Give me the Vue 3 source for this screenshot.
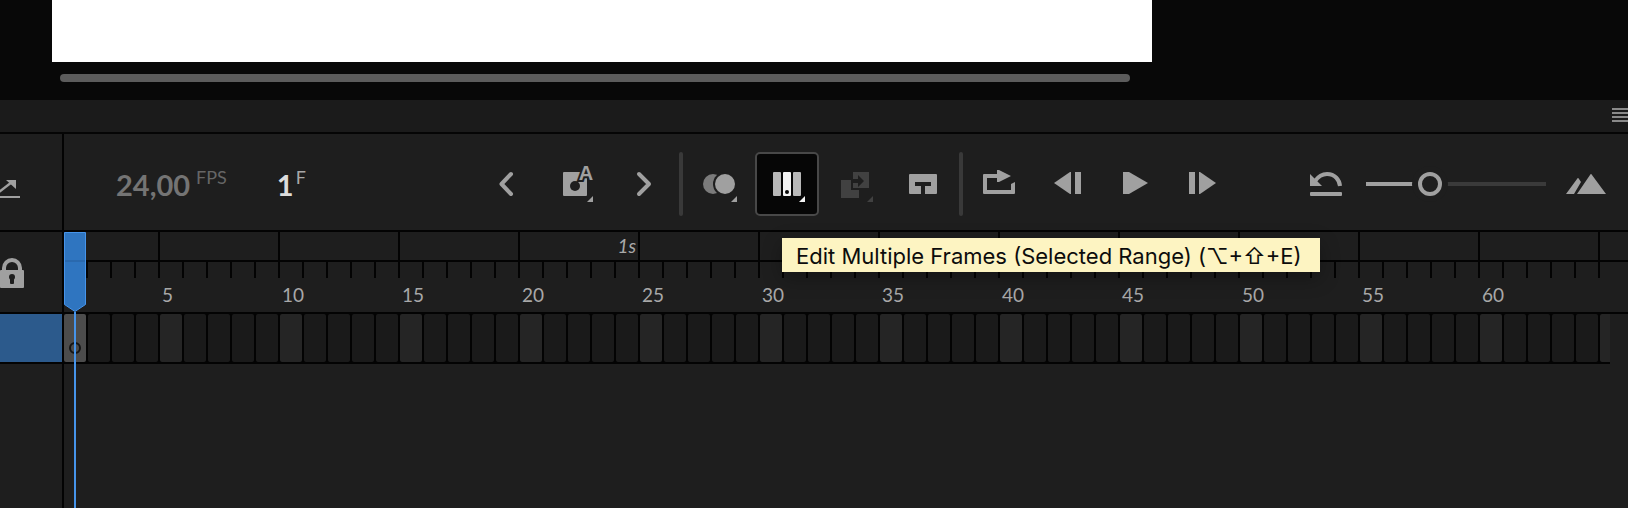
<script setup>
import { ref, computed } from 'vue'

const zoom = ref(100)
const zoomStyle = computed(() => ({ '--fill': `${12 + (156 * zoom.value) / 300}px` }))

const frames = Array.from({ length: 65 }, (_, i) => i + 1)
const spans = Array.from({ length: 14 }, (_, i) => ({
  id: i,
  first: i === 0,
  label: i === 4 ? '1s' : ''
}))
</script>

<template>
  <div class="app">
    <section class="stage" aria-label="Stage">
      <div class="canvas"></div>
      <div class="scroll-track"><div class="scroll-thumb"></div></div>
    </section>

    <header class="panel-head">
      <button class="menu" aria-label="Panel menu"><i></i><i></i><i></i><i></i></button>
    </header>

    <div class="toolbar">
      <div class="side side-tools">
        <button class="bare" aria-label="Layer parenting">
          <svg width="20" height="24" viewBox="0 0 20 24">
            <path d="M0 21H20" stroke="#a0a0a0" stroke-width="2" />
            <path d="M-1 16L12 6" stroke="#a0a0a0" stroke-width="2.4" />
            <path d="M6 4H16V13Z" fill="#a0a0a0" />
          </svg>
        </button>
      </div>

      <div class="readouts">
        <div class="readout fps"><b>24,00</b><sup>FPS</sup></div>
        <div class="readout frame"><b>1</b><sup>F</sup></div>
      </div>

      <div class="tools">
        <button class="tool" aria-label="Previous keyframe">
          <svg viewBox="0 0 64 64"><path class="chev" d="M36 22L26.500 32L36 42" /></svg>
        </button>
        <button class="tool" aria-label="Auto keyframe">
          <svg viewBox="0 0 64 64">
            <rect x="20" y="20" width="24" height="24" rx="1" />
            <circle cx="32" cy="34" r="5" class="bg" />
            <text x="43" y="28" text-anchor="middle" class="glyph">A</text>
            <path d="M50 44V50H44Z" />
          </svg>
        </button>
        <button class="tool" aria-label="Next keyframe">
          <svg viewBox="0 0 64 64"><path class="chev" d="M28 22L38 32L28 42" /></svg>
        </button>
        <span class="sep"></span>
        <button class="tool" aria-label="Onion skin">
          <svg viewBox="0 0 64 64">
            <circle cx="26" cy="32" r="10" fill="#7b7b7b" />
            <circle cx="38" cy="32" r="12" class="bg" />
            <circle cx="38" cy="32" r="10" />
            <path d="M50 44V50H44Z" />
          </svg>
        </button>
        <button class="tool active" aria-label="Edit Multiple Frames" aria-describedby="tip">
          <svg viewBox="0 0 64 64">
            <rect x="18" y="20" width="8" height="24" rx="1" fill="#b8b8b8" />
            <rect x="28" y="20" width="8" height="24" rx="1" fill="#f4f4f4" />
            <rect x="38" y="20" width="8" height="24" rx="1" fill="#b8b8b8" />
            <circle cx="32" cy="40" r="2" fill="#070707" />
            <path d="M50 44V50H44Z" fill="#f4f4f4" />
          </svg>
        </button>
        <button class="tool dim" disabled aria-label="Create tween">
          <svg viewBox="0 0 64 64">
            <path d="M18 28H28V38H36V46H18Z" />
            <path d="M30 20H46V36H30V31H28V27H30Z" />
            <path class="bg" d="M28 27H35V23L41 29L35 35V31H28Z" />
            <path d="M50 44V50H44Z" />
          </svg>
        </button>
        <button class="tool" aria-label="Insert frame">
          <svg viewBox="0 0 64 64">
            <rect x="18" y="22" width="28" height="20" rx="1" />
            <path class="bg" d="M24 30H40V34H34V42H30V34H24Z" />
          </svg>
        </button>
        <span class="sep"></span>
        <button class="tool" aria-label="Loop">
          <svg viewBox="0 0 64 64">
            <path d="M30 18H32L44 24L32 30H30V26H20V38H44V32L48 30V41Q48 42 47 42H17Q16 42 16 41V23Q16 22 17 22H30Z" />
          </svg>
        </button>
        <button class="tool" aria-label="Step back one frame">
          <svg viewBox="0 0 64 64">
            <path d="M36 20V42H35L19 31L35 20Z" /><rect x="40" y="20" width="6" height="22" />
          </svg>
        </button>
        <button class="tool" aria-label="Play">
          <svg viewBox="0 0 64 64"><path d="M20 20H26L45 31L26 42H20Z" /></svg>
        </button>
        <button class="tool" aria-label="Step forward one frame">
          <svg viewBox="0 0 64 64">
            <rect x="18" y="20" width="6" height="22" /><path d="M28 20H29L45 31L29 42H28Z" />
          </svg>
        </button>
      </div>

      <div class="zoom">
        <button class="bare" aria-label="Reset timeline zoom">
          <svg width="32" height="64" viewBox="0 0 32 64">
            <rect y="40" width="32" height="4" rx="1" />
            <path d="M0 22L12 34H0Z" />
            <path d="M5 29Q10 22 17 22C25 22 29.500 28 30 34" fill="none" stroke="#a0a0a0" stroke-width="4" />
          </svg>
        </button>
        <input v-model.number="zoom" class="slider" type="range" min="0" max="300" aria-label="Timeline zoom" :style="zoomStyle" />
        <button class="bare" aria-label="Fit in view">
          <svg width="40" height="64" viewBox="0 0 40 64">
            <path d="M0 42L11 27Q12 25 13 27L15 30L8 42Z" />
            <path d="M11 42L24 23Q25 21 26 23L40 42Z" />
          </svg>
        </button>
      </div>
    </div>

    <div class="ruler-row">
      <div class="side side-lock">
        <button class="bare" aria-label="Lock all layers">
          <svg width="24" height="32" viewBox="0 0 24 32">
            <path d="M4 14V10A8 8 0 0 1 20 10V14" fill="none" stroke="#a0a0a0" stroke-width="4" />
            <rect y="12" width="24" height="18" rx="1" />
            <circle cx="12" cy="19" r="3" class="bg" />
            <rect x="10" y="19" width="4" height="7" rx="1" class="bg" />
          </svg>
        </button>
      </div>
      <div class="ruler">
        <div class="spans">
          <div v-for="s in spans" :key="s.id" class="span" :class="{ first: s.first }">{{ s.label }}</div>
        </div>
        <div class="ticks">
          <div v-for="f in frames" :key="f" class="tick">
            <i></i>
            <span v-if="f % 5 === 0 && f < 65">{{ f }}</span>
          </div>
        </div>
        <div id="tip" class="tooltip" role="tooltip">Edit Multiple Frames (Selected Range) (⌥+⇧+E)</div>
      </div>
    </div>

    <div class="frame-row">
      <div class="side layer"></div>
      <div class="frames">
        <div v-for="f in frames" :key="f" class="cell" :class="{ fifth: f % 5 === 0, current: f === 1 }">
          <i v-if="f === 1" class="blank-key"></i>
        </div>
      </div>
    </div>

    <div class="rest">
      <div class="side"></div>
    </div>

    <div class="playhead">
      <svg width="22" height="80" viewBox="0 0 22 80">
        <path d="M.5 .5H21.500V72.500L11 79.500L.5 72.500Z" fill="#2f75c0" stroke="#4694ea" />
        <path d="M1 29H21" stroke="#2a69ae" stroke-width="2" />
      </svg>
      <div class="needle"></div>
    </div>
  </div>
</template>

<style>
body {
  margin: 0;
  background: #1e1e1e;
}
</style>

<style scoped>
* {
  box-sizing: border-box;
}
.app {
  position: relative;
  display: flex;
  flex-direction: column;
  min-height: 100vh;
  overflow: hidden;
  background: #1e1e1e;
  color: #a8a8a8;
  font-family: Lato, "Open Sans", sans-serif;
}
button {
  padding: 0;
  border: 0;
  background: none;
  color: inherit;
}
svg {
  display: block;
  fill: #a0a0a0;
}
.bg {
  fill: #1e1e1e;
}
.stage {
  height: 100px;
  padding: 0 476px 0 52px;
  background: #080808;
}
.canvas {
  height: 62px;
  background: #fff;
}
.scroll-track {
  padding: 12px 22px 0 8px;
}
.scroll-thumb {
  height: 8px;
  border-radius: 4px;
  background: #5c5c5c;
}
.panel-head {
  display: flex;
  justify-content: flex-end;
  height: 34px;
  padding-top: 8px;
  border-bottom: 2px solid #050505;
  background: #1b1b1b;
}
.menu {
  display: flex;
  flex-direction: column;
  gap: 2px;
  width: 16px;
}
.menu i {
  width: 100%;
  height: 2px;
  background: #8a8a8a;
}
.side {
  flex: none;
  width: 64px;
  border-right: 2px solid #030303;
}
.toolbar {
  display: flex;
  align-items: center;
  height: 98px;
  border-bottom: 2px solid #030303;
}
.side-tools {
  display: flex;
  align-items: center;
  height: 100%;
  padding-top: 12px;
}
.readouts {
  display: flex;
  gap: 50px;
  width: 411px;
  padding: 6px 0 0 52px;
}
.readout {
  display: flex;
  align-items: flex-start;
  gap: 6px;
}
.readout b {
  font-size: 29px;
  line-height: 36px;
}
.readout sup {
  font-size: 18px;
  line-height: 20px;
}
.fps b {
  color: #747474;
}
.fps sup {
  color: #666;
}
.frame {
  gap: 2px;
}
.frame b {
  color: #dcdcdc;
}
.tools {
  display: flex;
  gap: 4px;
  padding-top: 4px;
}
.tool {
  width: 64px;
  height: 64px;
  border-radius: 5px;
}
.tool svg {
  width: 64px;
  height: 64px;
}
.active {
  border: 2px solid #484848;
  background: #060606;
}
.active svg {
  margin: -2px;
}
.dim svg {
  fill: #414141;
}
.dim svg .bg {
  fill: #1e1e1e;
}
.chev {
  fill: none;
  stroke: #a0a0a0;
  stroke-width: 4;
  stroke-linecap: round;
  stroke-linejoin: round;
}
.glyph {
  font: bold 20px "Liberation Sans", sans-serif;
  paint-order: stroke;
  stroke: #1e1e1e;
  stroke-width: 4px;
}
.sep {
  width: 4px;
  border-radius: 2px;
  background: #393939;
}
.zoom {
  display: flex;
  align-items: center;
  margin-left: auto;
  padding: 4px 22px 0 0;
}
.slider {
  appearance: none;
  width: 180px;
  height: 24px;
  margin: 0 20px 0 24px;
  background: linear-gradient(90deg, #a0a0a0 var(--fill), #3a3a3a var(--fill)) center / 100% 4px no-repeat;
}
.slider::-webkit-slider-thumb {
  appearance: none;
  width: 24px;
  height: 24px;
  border: 4px solid #a0a0a0;
  border-radius: 50%;
  background: #1e1e1e;
  box-shadow: 0 0 0 6px #1e1e1e;
}
.ruler-row {
  display: flex;
  height: 82px;
  border-bottom: 2px solid #030303;
}
.side-lock {
  display: flex;
  align-items: center;
  padding-top: 4px;
}
.ruler {
  position: relative;
  flex: 1;
  min-width: 0;
}
.spans {
  display: flex;
  height: 30px;
  overflow: hidden;
  border-bottom: 2px solid #030303;
}
.span {
  flex: none;
  width: 120px;
  padding-right: 2px;
  border-right: 2px solid #030303;
  font-size: 19px;
  font-style: italic;
  line-height: 28px;
  text-align: right;
}
.span.first {
  width: 96px;
}
.ticks {
  display: flex;
  margin-right: 18px;
  overflow: hidden;
}
.tick {
  flex: none;
  width: 24px;
  height: 50px;
}
.tick i {
  display: block;
  height: 16px;
  border-right: 2px solid #030303;
}
.tick span {
  padding-left: 2px;
  font-size: 19px;
  line-height: 34px;
}
.tooltip {
  position: absolute;
  top: 6px;
  left: 718px;
  padding: 2px 18px 0 14px;
  background: #fdf4c2;
  box-shadow: 0 6px 20px rgba(0, 0, 0, 0.3);
  color: #0c0c0c;
  font-family: Inter, "DejaVu Sans", sans-serif;
  font-size: 22px;
  line-height: 32px;
  white-space: nowrap;
}
.frame-row {
  display: flex;
  height: 50px;
}
.layer {
  border-bottom: 2px solid #030303;
  background: #2c5a8c;
}
.frames {
  display: flex;
  flex: 1;
  min-width: 0;
  margin-right: 18px;
  overflow: hidden;
  border-bottom: 2px solid #030303;
  background: #030303;
}
.cell {
  flex: none;
  width: 22px;
  margin-right: 2px;
  border-radius: 2px;
  background: #1a1a1a;
}
.fifth {
  background: #252525;
}
.current {
  display: flex;
  align-items: flex-end;
  justify-content: center;
  padding-bottom: 8px;
  background: #4c4c4c;
}
.blank-key {
  width: 12px;
  height: 12px;
  border: 2px solid #141414;
  border-radius: 50%;
}
.rest {
  display: flex;
  flex: 1;
}
.playhead {
  position: absolute;
  top: 232px;
  bottom: 0;
  left: 64px;
  display: flex;
  flex-direction: column;
  align-items: center;
}
.needle {
  flex: 1;
  width: 2px;
  background: #4694ea;
}
</style>
